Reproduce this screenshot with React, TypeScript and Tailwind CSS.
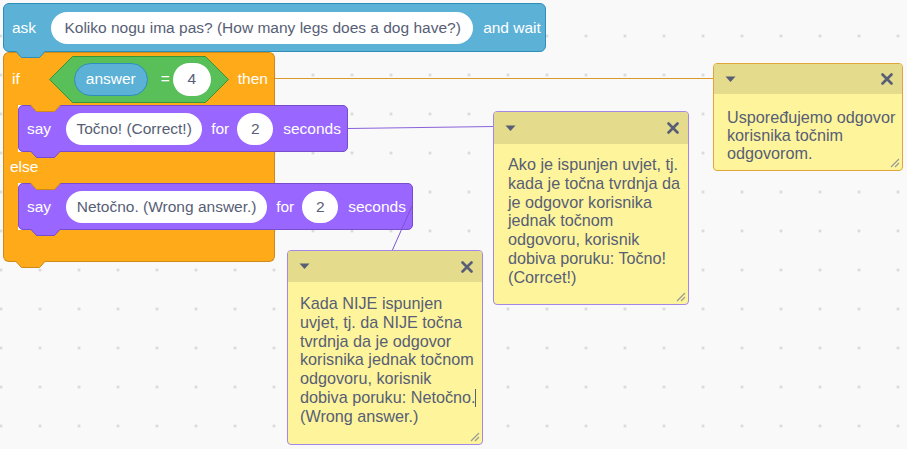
import React from "react";

const font = "font-['Liberation_Sans',Arial,sans-serif]";

// bump under a block (the puzzle tab that fits into the next block)
function Bump({ color, stroke, left = "left-[11px]" }: { color: string; stroke: string; left?: string }) {
  return (
    <svg className={`absolute top-full ${left} z-10`} width="31" height="8" viewBox="0 0 31 8">
      <path d="M0.5 0 L6.5 6.5 L24.5 6.5 L30.5 0" fill={color} stroke={stroke} />
    </svg>
  );
}

function Pill({ children, cls = "" }: { children: React.ReactNode; cls?: string }) {
  return (
    <div className={`h-[32px] rounded-full bg-white flex items-center justify-center whitespace-nowrap text-[#575e75] ${cls}`}>
      {children}
    </div>
  );
}

function SayBlock({ msg, msgCls }: { msg: string; msgCls: string }) {
  return (
    <div className="relative h-[47px] bg-[#9966ff] border border-[#774dcb] rounded-[5px] flex items-center pl-[8px] pr-[6px] text-white whitespace-nowrap">
      <span>say</span>
      <Pill cls={`ml-[15px] ${msgCls}`}>{msg}</Pill>
      <span className="ml-[9px]">for</span>
      <Pill cls="ml-[8px] w-[36px]">2</Pill>
      <span className="ml-[10px]">seconds</span>
      <Bump color="#9966ff" stroke="#774dcb" />
    </div>
  );
}

function Comment({
  pos,
  border,
  headH,
  bodyCls,
  lines,
  caretAfter,
}: {
  pos: string;
  border: string;
  headH: string;
  bodyCls: string;
  lines: string[];
  caretAfter?: number;
}) {
  return (
    <div className={`absolute ${pos} flex flex-col rounded-[4px] border ${border} bg-[#fef49c] overflow-hidden z-20`}>
      <div className={`${headH} shrink-0 bg-[#e4db8c] flex items-center justify-between pl-[11px] pr-[9px]`}>
        <svg width="11" height="7" viewBox="0 0 11 7">
          <path d="M0.5 0.5 L10.5 0.5 L5.5 6 Z" fill="#575e75" />
        </svg>
        <svg width="12" height="12" viewBox="0 0 12 12">
          <path d="M1.5 1.5 L10.5 10.5 M10.5 1.5 L1.5 10.5" stroke="#575e75" strokeWidth="2.6" strokeLinecap="round" />
        </svg>
      </div>
      <div className={`relative flex-1 text-[16.2px] leading-[18.8px] text-[#575e75] ${bodyCls}`}>
        {lines.map((l, i) => (
          <div key={i} className="whitespace-nowrap">
            {l}
            {caretAfter === i && <span className="inline-block w-px h-[18px] bg-[#575e75] align-[-4px]" />}
          </div>
        ))}
        <svg className="absolute right-[2px] bottom-[2px]" width="11" height="11" viewBox="0 0 11 11">
          <path d="M2 10 L10 2 M6 10 L10 6" stroke="#9a9a9a" strokeWidth="1.2" />
        </svg>
      </div>
    </div>
  );
}

export default function App() {
  return (
    <div
      className={`relative w-[907px] h-[449px] overflow-hidden bg-[#f9f9f9] bg-[radial-gradient(circle,#d6d6d6_1px,transparent_1.7px)] bg-size-[39px_39px] bg-position-[-18.5px_16.5px] ${font} text-[15.5px]`}
    >
      {/* script */}
      <div className="absolute left-[3px] top-[3px] flex flex-col items-start">
        {/* ask */}
        <div className="relative z-10 h-[49px] w-[543px] bg-[#5cb1d6] border border-[#2e8eb8] rounded-[6px] flex items-center pl-[8px] text-white whitespace-nowrap">
          <span>ask</span>
          <Pill cls="ml-[15px] w-[422px] pl-[1px]">Koliko nogu ima pas? (How many legs does a dog have?)</Pill>
          <span className="ml-[10px]">and wait</span>
          <Bump color="#5cb1d6" stroke="#2e8eb8" />
        </div>

        {/* if / else */}
        <div className="flex flex-col items-start text-white">
          <div className="relative h-[53px] w-[272px] bg-[#ffab19] border border-b-0 border-[#cf8b17] rounded-t-[6px] flex items-center pl-[8px]">
            <span>if</span>
            <div className="relative ml-[29px] w-[180px] h-[47px] flex items-center pl-[25px]">
              <svg className="absolute inset-0" width="180" height="47" viewBox="0 0 180 47">
                <path d="M0.5 23.5 L23.5 0.5 L156.5 0.5 L179.5 23.5 L156.5 46.5 L23.5 46.5 Z" fill="#59c059" stroke="#389438" />
              </svg>
              <div className="relative h-[33px] w-[74px] rounded-full bg-[#5cb1d6] border border-[#2e8eb8] flex items-center justify-center">
                answer
              </div>
              <span className="relative ml-[13px]">=</span>
              <Pill cls="relative ml-[3px] w-[38px] h-[33px]">4</Pill>
            </div>
            <span className="ml-[9px]">then</span>
            <Bump color="#ffab19" stroke="#cf8b17" left="left-[26px]" />
          </div>

          <div className="flex">
            <div className="w-[15px] bg-[#ffab19] border-l border-[#cf8b17]" />
            <SayBlock msg="Točno! (Correct!)" msgCls="w-[136px]" />
          </div>

          <div className="relative h-[31px] w-[272px] bg-[#ffab19] border-x border-[#cf8b17] flex items-center pl-[6px] pb-[2px]">
            <span>else</span>
            <Bump color="#ffab19" stroke="#cf8b17" left="left-[26px]" />
          </div>

          <div className="flex">
            <div className="w-[15px] bg-[#ffab19] border-l border-[#cf8b17]" />
            <SayBlock msg="Netočno. (Wrong answer.)" msgCls="w-[201px]" />
          </div>

          <div className="relative h-[32px] w-[272px] bg-[#ffab19] border border-t-0 border-[#cf8b17] rounded-b-[6px]">
            <Bump color="#ffab19" stroke="#cf8b17" />
          </div>
        </div>
      </div>

      {/* comment connectors */}
      <svg className="absolute inset-0 pointer-events-none" width="907" height="449">
        <line x1="275" y1="78.5" x2="714" y2="78.5" stroke="#dd9a2c" strokeWidth="1" />
        <line x1="348" y1="128.5" x2="494" y2="126.5" stroke="#8a63da" strokeWidth="1" />
        <line x1="412" y1="206" x2="392" y2="251" stroke="#7b55d0" strokeWidth="1" />
      </svg>

      <Comment
        pos="left-[713px] top-[63px] w-[190px] h-[108px]"
        border="border-[#e3a43a]"
        headH="h-[30px]"
        bodyCls="pl-[13px] pt-[14px] leading-[18px]"
        lines={["Uspoređujemo odgovor", "korisnika točnim", "odgovorom."]}
      />
      <Comment
        pos="left-[493px] top-[111px] w-[196px] h-[194px]"
        border="border-[#a587e6]"
        headH="h-[32px]"
        bodyCls="pl-[14px] pt-[11px]"
        lines={[
          "Ako je ispunjen uvjet, tj.",
          "kada je točna tvrdnja da",
          "je odgovor korisnika",
          "jednak točnom",
          "odgovoru, korisnik",
          "dobiva poruku: Točno!",
          "(Corrcet!)",
        ]}
      />
      <Comment
        pos="left-[287px] top-[250px] w-[196px] h-[195px]"
        border="border-[#a587e6]"
        headH="h-[31px]"
        bodyCls="pl-[12px] pt-[12px]"
        caretAfter={5}
        lines={[
          "Kada NIJE ispunjen",
          "uvjet, tj. da NIJE točna",
          "tvrdnja da je odgovor",
          "korisnika jednak točnom",
          "odgovoru, korisnik",
          "dobiva poruku: Netočno.",
          "(Wrong answer.)",
        ]}
      />
    </div>
  );
}
